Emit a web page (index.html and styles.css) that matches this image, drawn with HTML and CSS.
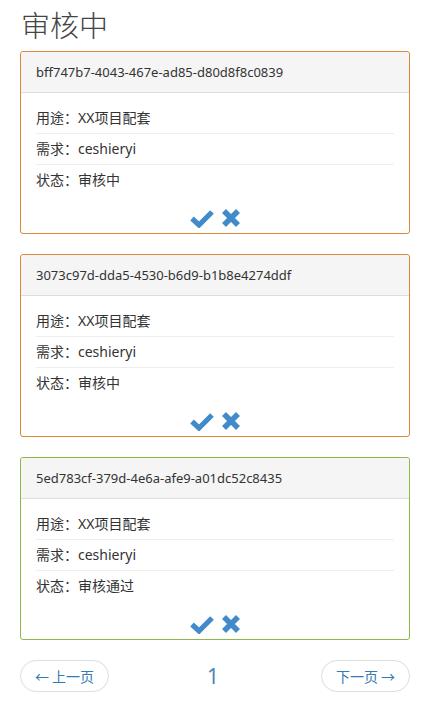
FILE: index.html
```html
<!DOCTYPE html>
<html lang="zh">
<head>
<meta charset="utf-8">
<title>审核中</title>
<link rel="stylesheet" href="styles.css">
</head>
<body>
<div class="page">
  <h1 class="title">审核中</h1>

  <div class="card card-warn">
    <div class="card-head">bff747b7-4043-467e-ad85-d80d8f8c0839</div>
    <div class="card-body">
      <ul class="rows">
        <li>用途：XX项目配套</li>
        <li>需求：ceshieryi</li>
        <li>状态：审核中</li>
      </ul>
      <div class="actions">
        <svg class="ic-ok" width="24" height="19" viewBox="0 0 24 19"><polyline points="2,9.5 9,16 22,3" fill="none" stroke="#428bca" stroke-width="5.2"/></svg>
        <svg class="ic-x" width="20" height="20" viewBox="0 0 20 20"><path d="M3 3 L17 17 M17 3 L3 17" fill="none" stroke="#428bca" stroke-width="5.6"/></svg>
      </div>
    </div>
  </div>

  <div class="card card-warn">
    <div class="card-head">3073c97d-dda5-4530-b6d9-b1b8e4274ddf</div>
    <div class="card-body">
      <ul class="rows">
        <li>用途：XX项目配套</li>
        <li>需求：ceshieryi</li>
        <li>状态：审核中</li>
      </ul>
      <div class="actions">
        <svg class="ic-ok" width="24" height="19" viewBox="0 0 24 19"><polyline points="2,9.5 9,16 22,3" fill="none" stroke="#428bca" stroke-width="5.2"/></svg>
        <svg class="ic-x" width="20" height="20" viewBox="0 0 20 20"><path d="M3 3 L17 17 M17 3 L3 17" fill="none" stroke="#428bca" stroke-width="5.6"/></svg>
      </div>
    </div>
  </div>

  <div class="card card-ok">
    <div class="card-head">5ed783cf-379d-4e6a-afe9-a01dc52c8435</div>
    <div class="card-body">
      <ul class="rows">
        <li>用途：XX项目配套</li>
        <li>需求：ceshieryi</li>
        <li>状态：审核通过</li>
      </ul>
      <div class="actions">
        <svg class="ic-ok" width="24" height="19" viewBox="0 0 24 19"><polyline points="2,9.5 9,16 22,3" fill="none" stroke="#428bca" stroke-width="5.2"/></svg>
        <svg class="ic-x" width="20" height="20" viewBox="0 0 20 20"><path d="M3 3 L17 17 M17 3 L3 17" fill="none" stroke="#428bca" stroke-width="5.6"/></svg>
      </div>
    </div>
  </div>

  <div class="pager">
    <a class="pill">← 上一页</a>
    <span class="num">1</span>
    <a class="pill">下一页 →</a>
  </div>
</div>
</body>
</html>
```

FILE: styles.css
```css
* { box-sizing: border-box; }
html, body { margin: 0; padding: 0; background: #fff; }
body {
  font-family: "Noto Sans", "Noto Sans CJK SC", sans-serif;
  font-size: 14px;
  line-height: 20px;
  color: #333;
}
.page {
  width: 390px;
  margin-left: 20px;
  padding-top: 6px;
}
.title {
  margin: 0 0 9px 1px;
  font-family: "Noto Sans CJK SC", sans-serif;
  font-weight: 300;
  font-size: 29px;
  line-height: 36px;
  color: #444;
}
.card {
  border: 1px solid #ddd;
  border-radius: 3px;
  margin-bottom: 20px;
  background: #fff;
}
.card-warn { border-color: #d9893a; }
.card-ok { border-color: #8bb84a; }
.card-head {
  background: #f5f5f5;
  border-bottom: 1px solid #ddd;
  border-radius: 3px 3px 0 0;
  padding: 10px 15px;
  font-size: 13px;
  line-height: 20px;
  color: #333;
}
.card-body {
  padding: 15px 15px 3px;
}
.rows {
  list-style: none;
  margin: 0;
  padding: 0;
}
.rows li {
  padding: 5px 0;
  border-bottom: 1px solid #eee;
}
.rows li:first-child { padding-top: 0; }
.rows li:last-child { border-bottom: 0; }
.actions {
  display: flex;
  justify-content: center;
  align-items: center;
  gap: 7px;
  height: 24px;
  margin-top: 11px;
}
.actions svg { display: block; }
.pager {
  display: flex;
  justify-content: space-between;
  align-items: center;
  margin-bottom: 20px;
}
.pill {
  display: inline-block;
  border: 1px solid #ddd;
  border-radius: 16px;
  padding: 5px 0;
  width: 89px;
  text-align: center;
  white-space: nowrap;
  color: #337ab7;
  font-size: 14px;
  line-height: 20px;
  font-family: "Noto Sans CJK SC", sans-serif;
}
.num {
  font-size: 21px;
  color: #4a86b8;
  line-height: 30px;
  margin-left: 0;
  margin-right: 4px;
}
```
